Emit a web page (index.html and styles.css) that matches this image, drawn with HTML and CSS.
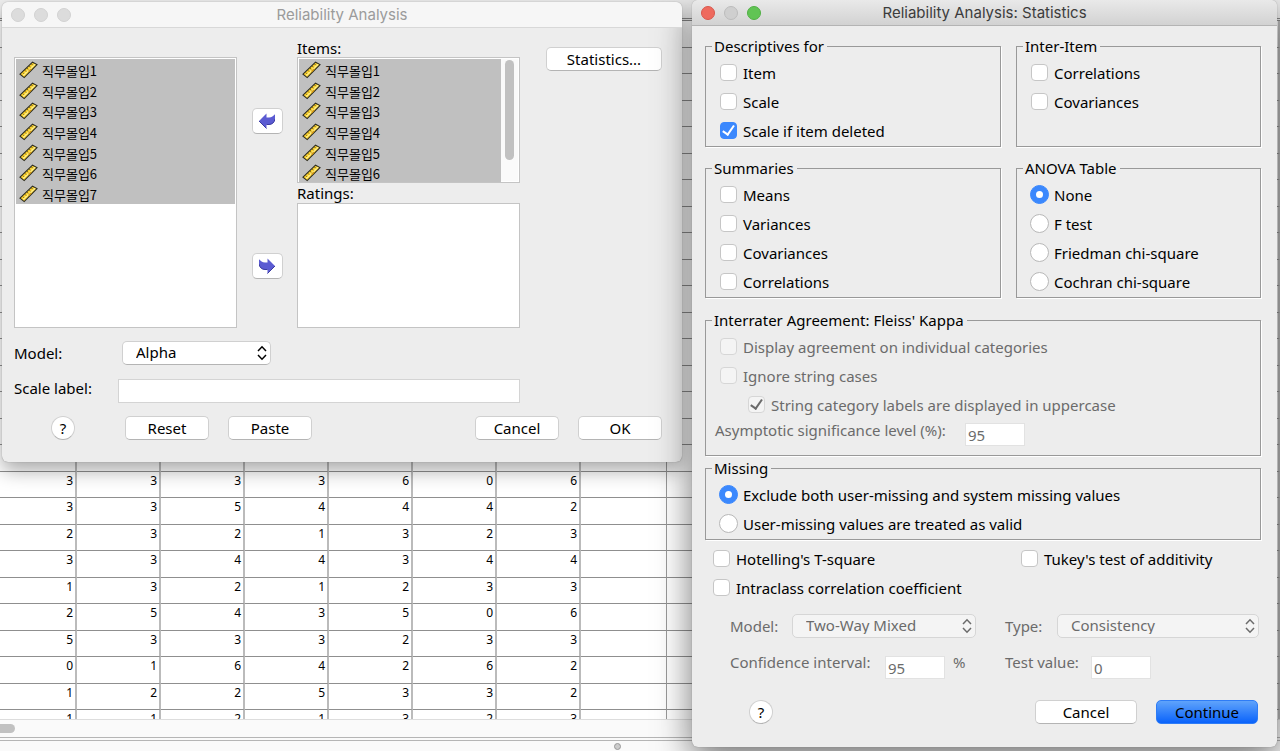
FILE: index.html
```html
<!DOCTYPE html>
<html lang="en">
<head>
<meta charset="UTF-8" />
<meta name="viewport" content="width=device-width, initial-scale=1.0"/>
<title>Reliability Analysis</title>
<link rel="stylesheet" href="styles.css">
</head>
<body>

<svg class="defs" aria-hidden="true">
  <symbol id="ruler" viewBox="0 0 19 18">
    <path d="M1 13.2 13.5 1.2 18 3.6 5.2 16.6Z" fill="#fbd02c" stroke="#2c2c22" stroke-width="1.1"/>
    <path d="M4.2 14.6 16 3.2" stroke="#fff08a" stroke-width="1.4"/>
    <path d="M3.8 11.6 4.9 12.7M6 9.4 7.1 10.5M8.2 7.3 9.3 8.4M10.400 5.200 11.500 6.300M12.600 3.100 13.700 4.200" stroke="#5c4a08" stroke-width="1"/>
    <path d="M9.500 10.500 12 8" stroke="#d99a12" stroke-width="1.4"/>
  </symbol>
  <symbol id="chevrons" viewBox="0 0 10 16">
    <path d="M1 6 5 1.8 9 6M1 10 5 14.2 9 10" fill="none" stroke="currentColor" stroke-width="1.5"/>
  </symbol>
  <symbol id="arrow" viewBox="0 0 16 16">
    <path d="M0 8 7.5 .5V4.5H10C13 4.5 14 2.8 16 1.2V6C15.500 9.500 13 11.500 10 11.500H7.500V15.500Z" fill="#5b5bd2"/>
    <path d="M7.500 15.500 0 8M7.500 11.500H10C13 11.500 15.500 9.500 16 6" fill="none" stroke="#3a3aa0" stroke-width="1"/>
  </symbol>
</svg>

<div class="sheet">
  <div class="sheet-head"></div>
  <div class="sheet-body">
    <table id="dataGrid">
      <colgroup>
        <col class="c-first"><col class="c"><col class="c"><col class="c"><col class="c"><col class="c"><col class="c"><col class="c-wide"><col>
      </colgroup>
      <tbody></tbody>
    </table>
  </div>
  <div class="sheet-scroll"><span class="thumb"></span></div>
  <div class="sheet-status"><span class="grip"></span></div>
</div>

<main class="desktop">

  <section class="window reliability">
    <header class="titlebar">
      <span class="light"></span><span class="light"></span><span class="light"></span>
      <h1>Reliability Analysis</h1>
    </header>
    <form class="content">
      <div class="pickers">
        <ul class="list source" id="sourceList"></ul>
        <div class="movers">
          <button type="button" class="move" aria-label="Move left"><svg><use href="#arrow"/></svg></button>
          <button type="button" class="move right" aria-label="Move right"><svg><use href="#arrow"/></svg></button>
        </div>
        <div class="targets">
          <h2>Items:</h2>
          <div class="list scrolling">
            <ul id="itemList"></ul>
            <div class="track"><span></span></div>
          </div>
          <h2>Ratings:</h2>
          <div class="list ratings"></div>
        </div>
        <div class="side"><button type="button">Statistics...</button></div>
      </div>
      <div class="model-row">
        <label for="model">Model:</label>
        <span class="select">
          <select id="model"><option>Alpha</option></select>
          <svg><use href="#chevrons"/></svg>
        </span>
      </div>
      <div class="label-row">
        <label for="scaleLabel">Scale label:</label>
        <input type="text" id="scaleLabel">
      </div>
      <div class="actions">
        <button type="button" class="help">?</button>
        <button type="button">Reset</button>
        <button type="button">Paste</button>
        <button type="button" class="push">Cancel</button>
        <button type="button">OK</button>
      </div>
    </form>
  </section>

  <section class="window statistics">
    <header class="titlebar">
      <span class="light red"></span><span class="light gray"></span><span class="light green"></span>
      <h1>Reliability Analysis: Statistics</h1>
    </header>
    <form class="content">
      <div class="groups">
        <fieldset>
          <legend>Descriptives for</legend>
          <label class="check"><input type="checkbox">Item</label>
          <label class="check"><input type="checkbox">Scale</label>
          <label class="check"><input type="checkbox" checked>Scale if item deleted</label>
        </fieldset>
        <fieldset>
          <legend>Inter-Item</legend>
          <label class="check"><input type="checkbox">Correlations</label>
          <label class="check"><input type="checkbox">Covariances</label>
        </fieldset>
        <fieldset>
          <legend>Summaries</legend>
          <label class="check"><input type="checkbox">Means</label>
          <label class="check"><input type="checkbox">Variances</label>
          <label class="check"><input type="checkbox">Covariances</label>
          <label class="check"><input type="checkbox">Correlations</label>
        </fieldset>
        <fieldset>
          <legend>ANOVA Table</legend>
          <label class="check"><input type="radio" name="anova" checked>None</label>
          <label class="check"><input type="radio" name="anova">F test</label>
          <label class="check"><input type="radio" name="anova">Friedman chi-square</label>
          <label class="check"><input type="radio" name="anova">Cochran chi-square</label>
        </fieldset>
      </div>

      <fieldset class="kappa">
        <legend>Interrater Agreement: Fleiss' Kappa</legend>
        <label class="check off"><input type="checkbox" disabled>Display agreement on individual categories</label>
        <label class="check off"><input type="checkbox" disabled>Ignore string cases</label>
        <label class="check off nested"><input type="checkbox" checked disabled>String category labels are displayed in uppercase</label>
        <div class="level off">
          <label for="level">Asymptotic significance level (%):</label>
          <input type="text" id="level" class="number" value="95" disabled>
        </div>
      </fieldset>

      <fieldset class="missing">
        <legend>Missing</legend>
        <label class="check"><input type="radio" name="missing" checked>Exclude both user-missing and system missing values</label>
        <label class="check"><input type="radio" name="missing">User-missing values are treated as valid</label>
      </fieldset>

      <div class="tests">
        <label class="check"><input type="checkbox">Hotelling's T-square</label>
        <label class="check"><input type="checkbox">Tukey's test of additivity</label>
        <label class="check"><input type="checkbox">Intraclass correlation coefficient</label>
      </div>

      <div class="icc off">
        <div class="field model">
          <label for="iccModel">Model:</label>
          <span class="select">
            <select id="iccModel" disabled><option>Two-Way Mixed</option></select>
            <svg><use href="#chevrons"/></svg>
          </span>
        </div>
        <div class="field type">
          <label for="iccType">Type:</label>
          <span class="select">
            <select id="iccType" disabled><option>Consistency</option></select>
            <svg><use href="#chevrons"/></svg>
          </span>
        </div>
        <div class="field value confidence">
          <label for="confidence">Confidence interval:</label>
          <input type="text" id="confidence" class="number" value="95" disabled>
          <span class="unit">%</span>
        </div>
        <div class="field value test">
          <label for="testValue">Test value:</label>
          <input type="text" id="testValue" class="number" value="0" disabled>
        </div>
      </div>

      <div class="actions">
        <button type="button" class="help">?</button>
        <button type="button" class="push">Cancel</button>
        <button type="button" class="primary">Continue</button>
      </div>
    </form>
  </section>

</main>

<script>
const values = [
  [3, 3, 3, 3, 6, 0, 6],
  [3, 3, 5, 4, 4, 4, 2],
  [2, 3, 2, 1, 3, 2, 3],
  [3, 3, 4, 4, 3, 4, 4],
  [1, 3, 2, 1, 2, 3, 3],
  [2, 5, 4, 3, 5, 0, 6],
  [5, 3, 3, 3, 2, 3, 3],
  [0, 1, 6, 4, 2, 6, 2],
  [1, 2, 2, 5, 3, 3, 2],
  [1, 1, 2, 1, 3, 2, 3]
];
const blankRows = 17;

const tbody = document.querySelector('#dataGrid tbody');
for (let i = 0; i < blankRows + values.length; i++) {
  const row = tbody.insertRow();
  const data = values[i - blankRows] || [];
  for (let c = 0; c < 9; c++) {
    row.insertCell().textContent = data[c] === undefined ? '' : data[c];
  }
}

function fillList(id, count) {
  const list = document.getElementById(id);
  for (let i = 1; i <= count; i++) {
    list.insertAdjacentHTML('beforeend', `<li><svg><use href="#ruler"/></svg>직무몰입${i}</li>`);
  }
}
fillList('sourceList', 7);
fillList('itemList', 6);
</script>

</body>
</html>
```
FILE: styles.css
```css
* {
  box-sizing: border-box;
}

body {
  margin: 0;
  min-height: 100vh;
  position: relative;
  overflow: hidden;
  background: #fff;
  color: #000;
  font-family: "Noto Sans", "Noto Sans CJK KR", sans-serif;
  font-size: 15px;
  line-height: 18px;
}

.defs {
  position: absolute;
  width: 0;
  height: 0;
}

/* spreadsheet behind the dialogs */
.sheet {
  position: absolute;
  inset: 0;
  display: flex;
  flex-direction: column;
}

.sheet-head {
  flex: none;
  height: 21px;
  background: #efefef;
  border-bottom: 3px double #888;
}

.sheet-body {
  flex: 1;
  min-height: 0;
  overflow: hidden;
}

.sheet table {
  width: 100%;
  table-layout: fixed;
  border-collapse: separate;
  border-spacing: 0;
  font-size: 12px;
  line-height: 18px;
}

.c-first {
  width: 77px;
}

.c {
  width: 84px;
}

.c-wide {
  width: 86px;
}

.sheet td {
  height: 27px;
  padding: 0 2px;
  text-align: right;
  vertical-align: top;
  border-right: 2px solid #bbb;
  border-bottom: 1px solid #8f8f8f;
}

.sheet tr:nth-child(even) td {
  height: 26px;
}

.sheet td:nth-child(8) {
  border-right: 1px solid #999;
}

.sheet-scroll {
  flex: none;
  height: 18px;
  padding-top: 4px;
  background: #fafafa;
  border-top: 1px solid #ddd;
}

.thumb {
  display: block;
  width: 15px;
  height: 9px;
  background: #c1c1c1;
  border-radius: 0 5px 5px 0;
}

.sheet-status {
  flex: none;
  height: 14px;
  border-top: 4px double #b5b5b5;
  background: #fafafa;
}

.grip {
  display: block;
  width: 7px;
  height: 7px;
  margin: 2px 0 0 48%;
  border: 1px solid #999;
  border-radius: 50%;
  background: #ccc;
}

/* dialogs */
.desktop {
  position: relative;
  display: grid;
  grid-template-columns: 680fr 585fr;
  gap: 10px;
  align-items: start;
  padding: 0 3px 0 2px;
}

.window {
  background: #ededed;
  border-radius: 6px;
}

.reliability {
  margin-top: 2px;
  box-shadow: 0 0 1px #777, 0 8px 20px rgba(0, 0, 0, 0.35);
}

.statistics {
  box-shadow: 0 0 1px #777, 0 12px 36px rgba(0, 0, 0, 0.55);
}

.titlebar {
  position: relative;
  display: flex;
  gap: 9px;
  height: 26px;
  padding: 6px 9px;
  background: #f6f6f6;
  border-bottom: 1px solid #d8d8d8;
  border-radius: 6px 6px 0 0;
}

.titlebar h1 {
  position: absolute;
  inset: 0;
  margin: 0;
  color: #9b9b9b;
  font-family: Inter, sans-serif;
  font-size: 15px;
  font-weight: 400;
  line-height: 26px;
  text-align: center;
}

.light {
  width: 14px;
  height: 14px;
  border: 1px solid #d2d2d2;
  border-radius: 50%;
  background: #dcdcdc;
}

.statistics .titlebar {
  background: linear-gradient(#e9e9e9, #d2d2d2);
  border-color: #b4b4b4;
}

.statistics h1 {
  color: #3c3c3c;
}

.light.red {
  background: #ee6a5e;
  border-color: #d9574c;
}

.light.gray {
  background: #cfcfcf;
  border-color: #bcbcbc;
}

.light.green {
  background: #61c454;
  border-color: #50b044;
}

/* controls */
button,
select,
input {
  margin: 0;
  font: inherit;
  color: inherit;
}

button {
  height: 24px;
  padding: 0 0 1px;
  border: 1px solid #d0d0d0;
  border-bottom-color: #b4b4b4;
  border-radius: 5px;
  background: #fff;
}

.select {
  position: relative;
  display: block;
}

select {
  display: block;
  appearance: none;
  width: 100%;
  height: 24px;
  padding: 0 24px 2px 13px;
  border: 1px solid #d0d0d0;
  border-bottom-color: #b4b4b4;
  border-radius: 5px;
  background: #fff;
}

.select svg {
  position: absolute;
  right: 4px;
  top: 4px;
  width: 10px;
  height: 16px;
}

input[type="text"] {
  height: 24px;
  padding: 0 2px;
  border: 1px solid #d4d4d4;
  background: #fff;
}

input[type="text"].number {
  width: 60px;
  height: 23px;
  border-color: #e2e2e2;
}

input[type="checkbox"],
input[type="radio"] {
  appearance: none;
  display: flex;
  flex: none;
  align-items: center;
  justify-content: center;
  width: 17px;
  height: 17px;
  margin-right: 6px;
  border: 1px solid #c6c6c6;
  border-radius: 4px;
  background: #fff;
}

input[type="radio"] {
  width: 19px;
  height: 19px;
  margin: 0 5px 0 -1px;
  border-color: #b8b8b8;
  border-radius: 50%;
}

input:checked {
  background: #3b88fd;
  border-color: #3b88fd;
}

input[type="checkbox"]:checked::after {
  content: "";
  width: 5px;
  height: 10px;
  margin-bottom: 3px;
  border: solid #fff;
  border-width: 0 2px 2px 0;
  transform: rotate(35deg);
}

input[type="radio"]:checked::after {
  content: "";
  width: 7px;
  height: 7px;
  border-radius: 50%;
  background: #fff;
}

.off,
.off select {
  color: #6b6b6b;
  opacity: 1;
}

.off input,
.off select {
  background: #f4f4f4;
  border-color: #d6d6d6;
}

.off input.number {
  background: #fff;
}

.off input[type="checkbox"]:checked::after {
  border-color: #6b6b6b;
}

.check {
  display: flex;
  align-items: center;
  height: 29px;
  line-height: 16px;
}

.actions {
  display: flex;
  align-items: center;
}

button.help {
  border-radius: 50%;
  width: 24px;
}

.push {
  margin-left: auto;
}

/* main dialog */
.reliability .content {
  padding: 13px 20px 22px 12px;
}

.pickers {
  display: grid;
  grid-template-columns: 1fr 60px 1fr 142px;
}

.pickers h2 {
  margin: 0;
  font-size: 15px;
  font-weight: 400;
  line-height: 14px;
  height: 16px;
}

.list {
  margin: 0;
  padding: 1px;
  list-style: none;
  background: #fff;
  border: 1px solid #c4c4c4;
}

.source {
  margin-top: 16px;
}

.list ul {
  flex: 1;
  margin: 0;
  padding: 0;
  list-style: none;
}

.list li {
  display: flex;
  align-items: center;
  gap: 4px;
  height: 21px;
  padding: 2px 0 0 3px;
  background: #c0c0c0;
  font-family: "Noto Sans CJK KR", sans-serif;
  font-size: 13px;
}

.list li:nth-child(3n) {
  height: 20px;
}

.list li svg {
  width: 19px;
  height: 18px;
  margin-bottom: 2px;
}

.movers {
  display: flex;
  flex-direction: column;
  align-items: center;
  gap: 119px;
  padding-top: 67px;
}

.move {
  display: flex;
  align-items: center;
  justify-content: center;
  width: 31px;
  height: 26px;
}

.move svg {
  width: 16px;
  height: 16px;
}

.move.right svg {
  transform: scaleX(-1);
}

.scrolling {
  display: flex;
  height: 126px;
  overflow: hidden;
}

.track {
  width: 17px;
  padding: 1px 3px;
  background: #fafafa;
}

.track span {
  display: block;
  width: 9px;
  height: 100px;
  margin-left: 1px;
  border-radius: 5px;
  background: #c1c1c1;
}

.targets h2:nth-of-type(2) {
  height: 20px;
  line-height: 20px;
}

.ratings {
  height: 125px;
}

.side {
  padding: 6px 0 0 26px;
}

.side button {
  width: 100%;
}

.model-row {
  display: grid;
  grid-template-columns: 108px 149px;
  align-items: center;
  margin-top: 13px;
}

.label-row {
  display: grid;
  grid-template-columns: 104px 1fr;
  margin: 14px 142px 0 0;
}

.reliability .actions {
  gap: 19px;
  margin-top: 13px;
}

.reliability .actions button {
  width: 84px;
}

.reliability .actions .help {
  width: 24px;
  margin: 0 31px 0 37px;
}

/* statistics dialog */
.statistics .content {
  padding: 11px 16px 23px 13px;
}

.groups {
  display: grid;
  grid-template-columns: 296fr 245fr;
  gap: 12px 15px;
}

fieldset {
  min-width: 0;
  margin: 0;
  padding: 3px 0 1px 14px;
  border: 1px solid #999;
  box-shadow: 1px 1px 0 #fff;
}

legend {
  height: 18px;
  margin-left: -8px;
  padding: 0 3px 0 2px;
}

.kappa {
  margin-top: 13px;
}

.nested {
  padding-left: 28px;
}

.level {
  display: flex;
  gap: 8px;
  margin: 2px 0 8px -5px;
}

.level label {
  width: 242px;
}

.level input {
  margin-top: 2px;
}

.missing {
  margin-top: 3px;
}

.tests {
  display: grid;
  grid-template-columns: 308fr 240fr;
  padding: 4px 0 0 8px;
}

.icc {
  display: grid;
  grid-template-columns: 276fr 255fr;
  row-gap: 15px;
  margin-top: 12px;
  padding: 0 2px 0 25px;
}

.field {
  display: flex;
  align-items: center;
}

.field .select {
  flex: 1;
}

.field.model label {
  width: 62px;
}

.field.model .select {
  margin-right: 29px;
}

.field.type label {
  width: 52px;
}

.field.value {
  gap: 8px;
  align-items: flex-start;
}

.field.value input {
  margin-top: 3px;
}

.field.confidence label {
  width: 147px;
}

.field.test label {
  width: 78px;
}

.statistics .actions {
  gap: 19px;
  margin: 21px 3px 0 44px;
}

.statistics .actions button {
  width: 102px;
}

.statistics .actions .help {
  width: 24px;
}

button.primary {
  border-color: #2e7cf6;
  background: linear-gradient(#5fa3fb, #0a63fb);
}
```
